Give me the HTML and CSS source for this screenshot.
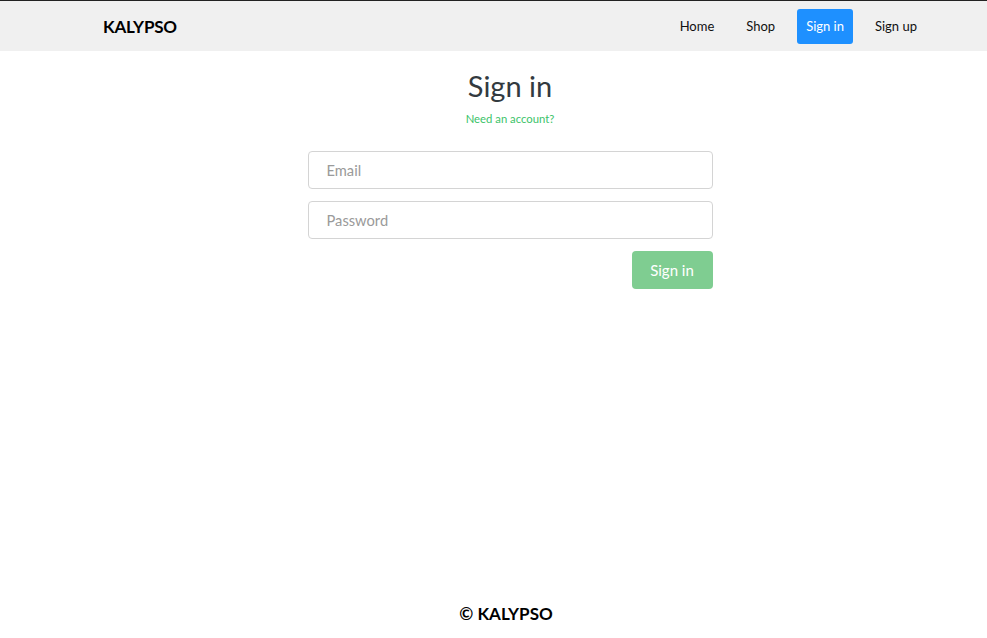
FILE: index.html
```html
<!DOCTYPE html>
<html>
<head>
<meta charset="utf-8">
<link rel="stylesheet" href="styles.css">
</head>
<body>
<header class="navbar">
  <a class="brand" href="#">KALYPSO</a>
  <nav class="nav-links">
    <a class="nav-link" href="#">Home</a>
    <a class="nav-link" href="#">Shop</a>
    <a class="nav-link active" href="#">Sign in</a>
    <a class="nav-link" href="#">Sign up</a>
  </nav>
</header>
<main class="main">
  <section class="auth">
    <h1 class="auth-title">Sign in</h1>
    <a class="auth-switch" href="#">Need an account?</a>
    <form class="auth-form">
      <input class="field" type="email" placeholder="Email">
      <input class="field" type="password" placeholder="Password">
      <div class="actions">
        <button class="submit" type="button">Sign in</button>
      </div>
    </form>
  </section>
</main>
<footer class="footer">© KALYPSO</footer>
</body>
</html>
```
FILE: styles.css
```css
* { box-sizing: border-box; }
html, body { margin: 0; padding: 0; }
body {
  font-family: "Lato", "Open Sans", sans-serif;
  color: #333;
  background: #fff;
  height: 638px;
  display: flex;
  flex-direction: column;
  border-top: 1px solid #222;
}
.navbar {
  background: #f0f0f0;
  height: 50px;
  display: flex;
  align-items: center;
  justify-content: space-between;
  padding: 0 60px 0 103px;
}
.brand {
  font-weight: 700;
  font-size: 17px;
  color: #000;
  text-decoration: none;
  letter-spacing: -0.2px;
}
.nav-links { display: flex; align-items: center; gap: 12px; }
.nav-link {
  color: #111;
  text-decoration: none;
  font-size: 13px;
  padding: 0 10px;
  height: 35px;
  line-height: 35px;
  border-radius: 3px;
}
.nav-link.active { background: #1e90ff; color: #fff; padding: 0 9px; }
.main {
  flex: 1;
  padding-left: 33px;
  display: flex;
  justify-content: center;
}
.auth {
  width: 405px;
  display: flex;
  flex-direction: column;
  align-items: center;
  padding-top: 17px;
}
.auth-title {
  margin: 0;
  font-weight: 400;
  font-size: 29px;
  line-height: 36px;
  color: #333a40;
}
.auth-switch {
  margin-top: 8px;
  font-size: 11.3px;
  color: #3cc36a;
  text-decoration: none;
}
.auth-form {
  width: 100%;
  margin-top: 26px;
  display: flex;
  flex-direction: column;
  gap: 12px;
}
.field {
  width: 100%;
  height: 38px;
  border: 1px solid #d4d4d4;
  border-radius: 4px;
  padding: 0 18px;
  font-family: inherit;
  font-size: 14.7px;
  color: #333;
}
.field::placeholder { color: #9a9a9a; }
.actions { display: flex; justify-content: flex-end; }
.submit {
  width: 81px;
  height: 38px;
  border: none;
  border-radius: 4px;
  background: #7fcd91;
  color: #fff;
  font-family: inherit;
  font-size: 15px;
}
.footer {
  text-align: center;
  font-weight: 700;
  font-size: 17px;
  color: #000;
  padding-left: 25px;
  padding-top: 12px;
  height: 48px;
  line-height: 24px;
}
```
